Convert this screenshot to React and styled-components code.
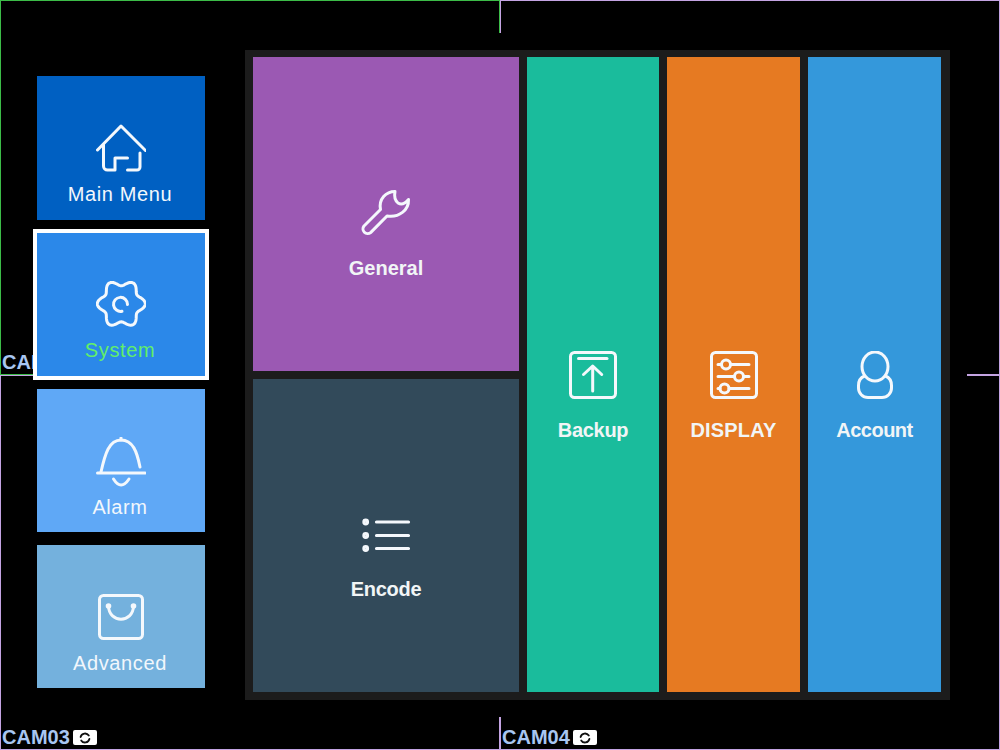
import React from 'react'
import styled, { createGlobalStyle } from 'styled-components'

const GlobalStyle = createGlobalStyle`
  html, body {
    margin: 0;
    padding: 0;
    background: #000;
    font-family: "Liberation Sans", Arial, sans-serif;
  }
`

const Screen = styled.div`
  position: relative;
  width: 1000px;
  height: 750px;
  overflow: hidden;
  background: #000;
`

const CamGrid = styled.div`
  display: grid;
  grid-template-columns: 500px 500px;
  grid-template-rows: 375px 375px;
`

const CamCell = styled.div`
  display: flex;
  align-items: flex-end;
  box-sizing: border-box;
  padding: 0 0 3px 1px;
  border: 1px solid ${p => (p.$focused ? '#3cbc48' : '#c4a4e2')};
`

const CamName = styled.span`
  margin-bottom: -3px;
  font-size: 20px;
  line-height: 23px;
  font-weight: 700;
  color: #a8c6f2;
`

const CamBadge = styled.span`
  display: flex;
  align-items: center;
  justify-content: center;
  width: 24px;
  height: 15px;
  margin: 0 0 1px 3px;
  border-radius: 2px;
  background: #fff;
`

const Overlay = styled.div`
  position: absolute;
  left: 33px;
  top: 33px;
  width: 934px;
  height: 684px;
  box-sizing: border-box;
  padding: 17px 0 0 4px;
  display: flex;
  align-items: flex-start;
  gap: 40px;
  background: #000;
`

const SideNav = styled.nav`
  display: grid;
  grid-template-rows: 144px repeat(3, 143px);
  gap: 13px;
  width: 168px;
  margin-top: 26px;
`

const NavItem = styled.div`
  display: flex;
  flex-direction: column;
  align-items: center;
  padding-top: 48px;
  box-sizing: border-box;
  background: ${p => p.$bg};
  box-shadow: ${p => (p.$selected ? '0 0 0 4px #fff' : 'none')};
`

const NavLabel = styled.span`
  margin: ${p => (p.$selected ? 7 : 8)}px 2px 0 0;
  font-size: 20px;
  line-height: 24px;
  letter-spacing: 0.6px;
  color: ${p => (p.$selected ? '#62ee6a' : '#f2f7fc')};
`

const Panel = styled.div`
  display: grid;
  grid-template-columns: 266px 132px 133px 133px;
  grid-template-rows: 314px 313px;
  gap: 8px;
  width: 705px;
  height: 650px;
  box-sizing: border-box;
  padding: 7px 9px 8px 8px;
  background: #1c1c1c;
`

const Tile = styled.div`
  display: grid;
  grid-template-rows: 1fr auto 1fr;
  justify-items: center;
  grid-column: ${p => p.$col};
  grid-row: ${p => p.$row};
  background: ${p => p.$bg};
`

const TileIcon = styled.div`
  grid-row: 2;
  height: 48px;
`

const TileLabel = styled.span`
  grid-row: 3;
  margin-top: ${p => p.$gap}px;
  font-size: 20px;
  line-height: 24px;
  font-weight: 700;
  letter-spacing: ${p => p.$squeeze || 0}px;
  color: #f1f5f6;
`

const Glyph = styled.svg`
  display: block;
  fill: none;
  stroke: ${p => p.$stroke || '#f4f8fc'};
  stroke-width: ${p => p.$weight || 3};
  stroke-linecap: round;
  stroke-linejoin: round;
`

// wavy six lobed outline of the gear
const gearPath = (() => {
  const pts = []
  for (let i = 0; i < 120; i++) {
    const t = (i / 120) * Math.PI * 2
    const r = 21 - 3 * Math.cos(6 * t)
    pts.push(`${(25.3 + r * Math.sin(t)).toFixed(2)} ${(22.8 - r * Math.cos(t)).toFixed(2)}`)
  }
  return `M${pts.join('L')}Z`
})()

const HomeIcon = () => (
  <Glyph width="50" height="50" viewBox="0 0 50 50">
    <path d="M1.5 26L25 2L49.5 26.5" />
    <path d="M7.5 21V42a4 4 0 0 0 4 4H19V34H31.5" />
    <path d="M31.5 46H41a3 3 0 0 0 3-3V29" />
  </Glyph>
)

const GearIcon = () => (
  <Glyph width="50" height="50" viewBox="0 0 50 50">
    <path d={gearPath} />
    <path d="M31.5 23.5A7 7 0 1 0 26 30.2" />
  </Glyph>
)

const BellIcon = () => (
  <Glyph width="50" height="50" viewBox="0 0 50 50">
    <path d="M5 35C9 17 13 3 25 3C37 3 41 15 44 30" />
    <path d="M25 1V3" />
    <path d="M1.5 36H49" />
    <path d="M17.5 42Q25 54 33 42" />
  </Glyph>
)

const BagIcon = () => (
  <Glyph width="50" height="50" viewBox="0 0 50 50">
    <rect x="3.5" y="2.5" width="43" height="43" rx="4" />
    <path d="M12.5 13C13 30.5 37 30.5 37.5 13" />
    <circle cx="12.5" cy="13" r="1.3" />
    <circle cx="37.5" cy="13" r="1.3" />
  </Glyph>
)

const WrenchIcon = () => (
  <Glyph width="50" height="48" viewBox="0 0 50 48">
    <path d="M34 1.5C25 1.5 17.5 9 19.5 19.5L3 36a4.7 4.7 0 0 0 6.6 6.6L26 26C38 28 48 20 47.5 9.5Q42 16 37 13Q32.5 9 34 1.5Z" />
  </Glyph>
)

const ListIcon = () => (
  <Glyph width="50" height="48" viewBox="0 0 50 48" $weight="3.2">
    <path d="M15.5 10H47.5M15.5 23.5H47.5M15.5 36.5H47.5" />
    <circle cx="4.7" cy="10" r="1.8" />
    <circle cx="4.7" cy="23.5" r="1.8" />
    <circle cx="4.7" cy="36.5" r="1.8" />
  </Glyph>
)

const UploadIcon = () => (
  <Glyph width="50" height="48" viewBox="0 0 50 48">
    <rect x="2.5" y="1.5" width="45" height="45" rx="4" />
    <path d="M10.5 7.5H39" />
    <path d="M24.7 40V15M15.5 23.5L24.7 15L33.7 23.5" />
  </Glyph>
)

const SlidersIcon = () => (
  <Glyph width="50" height="48" viewBox="0 0 50 48">
    <rect x="2.5" y="1.5" width="45" height="45" rx="4" />
    <path d="M9 13.5H12.5M21.5 13.5H40" />
    <circle cx="17" cy="13.5" r="4.5" />
    <path d="M9 25.5H25.5M34.5 25.5H40" />
    <circle cx="30" cy="25.5" r="4.5" />
    <path d="M9 37.5H11M20 37.5H40" />
    <circle cx="15.5" cy="37.5" r="4.5" />
  </Glyph>
)

const UserIcon = () => (
  <Glyph width="50" height="48" viewBox="0 0 50 48">
    <ellipse cx="25" cy="15.5" rx="13" ry="14.5" />
    <path d="M14.5 25C11 26.5 8.5 30 8.5 34.5V37A9.5 9.5 0 0 0 18 46.5H32A9.5 9.5 0 0 0 41.5 37V34.5C41.5 30 39 26.5 35.5 25" />
  </Glyph>
)

const RefreshIcon = () => (
  <Glyph width="14" height="12" viewBox="0 0 14 12" $stroke="#111" $weight="1.8">
    <path d="M2.6 5A4.5 4.5 0 0 1 10.8 3.6" />
    <path d="M11.4 7A4.5 4.5 0 0 1 3.2 8.4" />
  </Glyph>
)

const cams = ['CAM01', 'CAM02', 'CAM03', 'CAM04']

const navItems = [
  { name: 'Main Menu', bg: '#0060c2', Icon: HomeIcon },
  { name: 'System', bg: '#2b88e9', Icon: GearIcon, selected: true },
  { name: 'Alarm', bg: '#5fa8f6', Icon: BellIcon },
  { name: 'Advanced', bg: '#74b1dd', Icon: BagIcon },
]

const tiles = [
  { name: 'General', bg: '#9b59b3', Icon: WrenchIcon, col: '1', row: '1', gap: 18 },
  { name: 'Encode', bg: '#324a5a', Icon: ListIcon, col: '1', row: '2', gap: 17, squeeze: -0.3 },
  { name: 'Backup', bg: '#1abc9c', Icon: UploadIcon, col: '2', row: '1 / span 2', gap: 19, squeeze: -0.3 },
  { name: 'DISPLAY', bg: '#e67a22', Icon: SlidersIcon, col: '3', row: '1 / span 2', gap: 19, squeeze: 0.2 },
  { name: 'Account', bg: '#3498db', Icon: UserIcon, col: '4', row: '1 / span 2', gap: 19, squeeze: -0.5 },
]

export default function App() {
  return (
    <Screen>
      <GlobalStyle />
      <CamGrid>
        {cams.map((cam, i) => (
          <CamCell key={cam} $focused={i === 0}>
            <CamName>{cam}</CamName>
            <CamBadge>
              <RefreshIcon />
            </CamBadge>
          </CamCell>
        ))}
      </CamGrid>
      <Overlay>
        <SideNav>
          {navItems.map(({ name, bg, Icon, selected }) => (
            <NavItem key={name} $bg={bg} $selected={selected}>
              <Icon />
              <NavLabel $selected={selected}>{name}</NavLabel>
            </NavItem>
          ))}
        </SideNav>
        <Panel>
          {tiles.map(({ name, bg, Icon, col, row, gap, squeeze }) => (
            <Tile key={name} $bg={bg} $col={col} $row={row}>
              <TileIcon>
                <Icon />
              </TileIcon>
              <TileLabel $gap={gap} $squeeze={squeeze}>{name}</TileLabel>
            </Tile>
          ))}
        </Panel>
      </Overlay>
    </Screen>
  )
}
